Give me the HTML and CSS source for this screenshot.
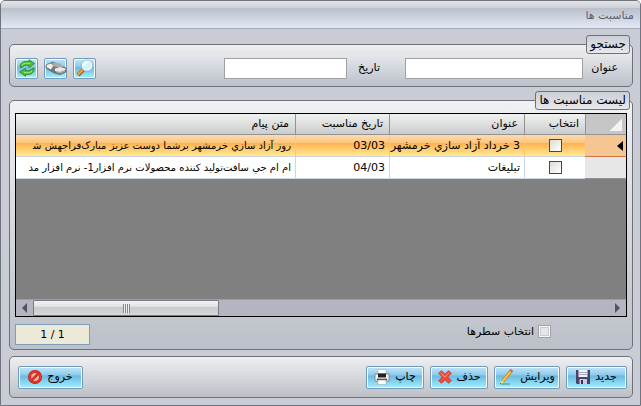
FILE: index.html
```
<!DOCTYPE html>
<html lang="fa" dir="rtl">
<head>
  <meta charset="UTF-8">
  <title>مناسبت ها</title>
  <link rel="stylesheet" href="styles.css">
</head>
<body>

<div class="window">
  <h1 class="title">مناسبت ها</h1>

  <div class="content">
    <!-- search -->
    <form class="panel search">
      <h2 class="caption">جستجو</h2>
      <label class="lbl-name" for="name">عنوان</label>
      <input class="box box-name" type="text" id="name">
      <label class="lbl-date" for="date">تاریخ</label>
      <input class="box box-date" type="text" id="date">
      <div class="tools">
        <button type="button" class="btn tool" aria-label="جستجو">
          <svg width="20" height="18" viewBox="0 0 20 18">
            <path d="M3 16L8 11" stroke="#8a5a20" stroke-width="4"/>
            <path d="M3 15.500L8 10.500" stroke="#f59a2c" stroke-width="2.500"/>
            <circle cx="12" cy="6.500" r="5" fill="#d4f1fc" stroke="#f4fbff" stroke-width="1.500"/>
            <circle cx="12" cy="6.500" r="5.700" fill="none" stroke="#6f9cc0" stroke-width=".6"/>
            <path d="M9 7a3.500 3.500 0 0 1 4-3.500" fill="none" stroke="#fff" stroke-width="1.500"/>
          </svg>
        </button>
        <button type="button" class="btn tool" aria-label="پاک کردن">
          <svg width="22" height="18" viewBox="0 0 22 18">
            <path d="M1 6L8 3L21 9V13L15 15.500L9 14L1 9Z" fill="#777" stroke="#666" stroke-width=".8"/>
            <path d="M8 3.500L14 4L19 8L12 8L6 7Z" fill="#a9abad"/>
            <path d="M1.500 6L6 4.500L8 7L6 10.500L2 8.500Z" fill="#f0f0f0"/>
            <path d="M10 9.500L15 8L20.500 9.500V11L15 13L10 12Z" fill="#e9e9e9"/>
            <path d="M11 12.500L15 14L20 12" fill="none" stroke="#bbb"/>
          </svg>
        </button>
        <button type="button" class="btn tool" aria-label="بازخوانی">
          <svg width="18" height="18" viewBox="0 0 18 18" fill="#4fc52c" stroke="#237c19" stroke-width=".8">
            <path d="M2 8C2 4 5 2 11 2.500V.8L16.500 4.500L11 8.500V6.500C7 6 5 6.500 4 8.500Z"/>
            <path d="M16 9.500C16 14 13 16 7.500 15.500V17.200L1.500 13L7.500 9.500V11.500C11 12 13 11.500 14 9.500Z"/>
            <path d="M4 6C6 4 8 4 12 4.500M14 12C12 14 10 14 6 13.500" fill="none" stroke="#b5f28f"/>
          </svg>
        </button>
      </div>
    </form>

    <!-- list -->
    <section class="panel list">
      <h2 class="caption">لیست مناسبت ها</h2>
      <div class="grid">
        <table>
          <colgroup>
            <col class="col-mark">
            <col class="col-check">
            <col class="col-name">
            <col class="col-date">
            <col>
          </colgroup>
          <thead>
            <tr>
              <th class="corner"></th>
              <th>انتخاب</th>
              <th>عنوان</th>
              <th>تاریخ مناسبت</th>
              <th>متن پیام</th>
            </tr>
          </thead>
          <tbody>
            <tr class="current">
              <td class="mark"><svg width="6" height="10" viewBox="0 0 6 10"><path d="M6 0V10L0 5Z"/></svg></td>
              <td class="pick"><input type="checkbox" aria-label="انتخاب"></td>
              <td>3 خرداد آزاد سازي خرمشهر</td>
              <td>03/03</td>
              <td class="message">روز آزاد سازي خرمشهر برشما دوست عزیز مبارک‌فراجهش ش&zwj;</td>
            </tr>
            <tr>
              <td class="mark"></td>
              <td class="pick"><input type="checkbox" aria-label="انتخاب"></td>
              <td>تبلیغات</td>
              <td>04/03</td>
              <td class="message">ام ام جي سافت‌تولید کننده محصولات نرم افزار1- نرم افزار مد</td>
            </tr>
          </tbody>
        </table>
        <div class="scroll">
          <svg class="arrow" width="5" height="10" viewBox="0 0 5 10"><path d="M0 0V10L5 5Z" fill="#50545e"/></svg>
          <div class="thumb"><i></i></div>
          <svg class="arrow" width="5" height="10" viewBox="0 0 5 10"><path d="M5 0V10L0 5Z" fill="#50545e"/></svg>
        </div>
      </div>
      <div class="status">
        <label class="all"><input type="checkbox">انتخاب سطرها</label>
        <input class="pages" type="text" value="1 / 1" dir="ltr" aria-label="صفحه" readonly>
      </div>
    </section>

    <!-- buttons -->
    <div class="panel actions">
      <button type="button" class="btn new">
        <span>جدید</span>
        <svg width="14" height="14" viewBox="0 0 14 14">
          <path d="M0 0H14V14H1L0 13Z" fill="#47436b"/>
          <path d="M2.500 0H11.500V7H2.500Z" fill="#f1f2fa"/>
          <path d="M3 2.500H11M3 4.500H11" stroke="#a5a7c2"/>
          <path d="M3.500 9H11V14H3.500Z" fill="#c9cbdc"/>
          <path d="M5 10H7V14H5Z" fill="#37345a"/>
        </svg>
      </button>
      <button type="button" class="btn edit">
        <span>ویرایش</span>
        <svg width="16" height="16" viewBox="0 0 16 16">
          <path d="M2 15H11" stroke="#6b9fae" stroke-width="1.500"/>
          <path d="M3.500 12.500L12 2" stroke="#b97415" stroke-width="3.400"/>
          <path d="M3.500 12.500L12 2" stroke="#ffc936" stroke-width="2"/>
          <path d="M11.500 2.600L13 .8" stroke="#d96758" stroke-width="3.400"/>
          <path d="M2.200 11.400L1 15.200L4.800 13.600Z" fill="#f2d7a6"/>
          <path d="M1.400 14L1 15.200L2.300 14.700Z" fill="#222"/>
        </svg>
      </button>
      <button type="button" class="btn delete">
        <span>حذف</span>
        <svg width="14" height="14" viewBox="0 0 14 14">
          <path d="M3.500 .7L7 4.200L10.500 .7L13.300 3.200L9.800 7L13.300 10.800L10.500 13.300L7 9.800L3.500 13.300L.7 10.800L4.200 7L.7 3.200Z" fill="#f04c3b" stroke="#c22d27" stroke-width=".7"/>
          <path d="M2.500 3L7 7L11 3" fill="none" stroke="#ff9280"/>
        </svg>
      </button>
      <button type="button" class="btn print">
        <span>چاپ</span>
        <svg width="16" height="16" viewBox="0 0 16 16">
          <path d="M4 .5H12V5H4Z" fill="#fff" stroke="#aaa" stroke-width=".6"/>
          <path d="M1 5H15V12H1Z" fill="#f4f4f2" stroke="#777" stroke-width=".8"/>
          <path d="M4 4.500H12V8.500H4Z" fill="#222"/>
          <path d="M3 10.500H13" stroke="#333" stroke-width="1.500"/>
          <path d="M4 11H12V15.500H4Z" fill="#fff" stroke="#aaa" stroke-width=".6"/>
        </svg>
      </button>
      <button type="button" class="btn exit">
        <span>خروج</span>
        <svg width="14" height="14" viewBox="0 0 14 14">
          <circle cx="7" cy="7" r="5.500" fill="#f3b7ad" stroke="#a92019" stroke-width="3"/>
          <circle cx="7" cy="7" r="5.500" fill="none" stroke="#ea3527" stroke-width="2"/>
          <path d="M3 11L11 3" stroke="#e12d22" stroke-width="2.500"/>
        </svg>
      </button>
    </div>
  </div>
</div>

</body>
</html>
```
FILE: styles.css
```
* {
  box-sizing: border-box;
  margin: 0;
  padding: 0;
}

body {
  background: #fff;
  color: #000;
  font: 11px/14px "DejaVu Sans", sans-serif;
}

button,
input {
  font: inherit;
  color: inherit;
}

.window {
  display: flex;
  flex-direction: column;
  min-height: 100vh;
  border: 1px solid #6e737c;
  border-radius: 5px 5px 0 0;
  background: #c9cbd5;
  overflow: hidden;
}

.title {
  height: 28px;
  padding: 8px 6px 0;
  border-bottom: 1px solid #a9abbb;
  background: linear-gradient(#e4e5e8, #cfd1d6 7px, #b9c0cb 7px, #e3e9f4);
  color: #5c5f69;
  font-size: 11px;
  font-weight: normal;
}

.content {
  flex: 1;
  display: flex;
  flex-direction: column;
  padding: 15px 7px 7px 8px;
}

.panel {
  position: relative;
  border: 1px solid #6e7178;
  border-radius: 5px;
}

/* sits on the top border of the panel */
.caption {
  position: absolute;
  top: -10px;
  right: 2px;
  height: 19px;
  padding: 1px 3px;
  border: 1px solid #6e7178;
  border-radius: 3px;
  background: linear-gradient(#ccced6, #e6e8ec);
  font-size: 12px;
  font-weight: normal;
  white-space: nowrap;
}

.search {
  display: flex;
  align-items: center;
  height: 43px;
  padding: 5px 14px 0 5px;
  background: linear-gradient(#eeeff0, #e4e5e8 9px, #e7e8ec 9px, #bbc0c9);
}

.lbl-name {
  width: 35px;
}

.lbl-date {
  width: 33px;
  margin-right: 25px;
}

.box {
  height: 21px;
  padding: 0 3px;
  border: 1px solid #a0a0a0;
  background: #fff;
}

.box-name {
  width: 178px;
}

.box-date {
  width: 123px;
}

.tools {
  display: flex;
  gap: 6px;
  margin-right: auto;
}

.btn {
  display: flex;
  align-items: center;
  justify-content: center;
  gap: 5px;
  height: 23px;
  border: 1px solid #7399bb;
  border-radius: 2px;
  box-shadow: inset 0 0 0 1px #f4fcff;
  background: linear-gradient(#c1e5f6, #8acaeb 40%, #68b8e2 41%, #a4f0fb);
  cursor: pointer;
}

.tool {
  width: 23px;
  height: 21px;
}

.btn svg {
  flex: none;
}

.list {
  flex: 1;
  display: flex;
  flex-direction: column;
  margin: 13px 0 6px;
  padding: 12px 5px 4px;
  background: linear-gradient(#f0f1f3, #bcc0c8);
}

.grid {
  flex: 1;
  display: flex;
  flex-direction: column;
  border: 1px solid #000;
  background: #808080;
  overflow: hidden;
}

table {
  width: 100%;
  table-layout: fixed;
  border-collapse: separate;
  border-spacing: 0;
}

.col-mark {
  width: 41px;
}

.col-check {
  width: 61px;
}

.col-name {
  width: 135px;
}

.col-date {
  width: 94px;
}

th,
td {
  overflow: hidden;
  white-space: nowrap;
  text-align: right;
}

th {
  height: 21px;
  padding: 0 6px;
  border-left: 1px solid #929292;
  border-bottom: 1px solid #929292;
  background: linear-gradient(#f0f2ef, #cbccce);
  font-weight: normal;
}

th:last-child,
td:last-child {
  border-left: 0;
}

.corner {
  background: linear-gradient(135deg, transparent 50%, #f3f3f3 50%) 24px 5px / 12px 12px no-repeat #c6c6c6;
}

td {
  height: 22px;
  padding: 0 4px;
  border-left: 1px solid #cdd6e8;
  border-bottom: 1px solid #cdd6e8;
  background: #fff;
}

.current td {
  border-left-color: #ffc575;
  background: linear-gradient(#fbdcb3, #fec77f 35%, #ffb254 40%, #ffeb92);
}

td.message {
  padding-left: 0;
  font-size: 10px;
}

td.mark {
  padding: 0 3px;
  border-left: 0;
  border-bottom-color: #929292;
  background: #e7e7e7;
}

.current td.mark {
  border-bottom-color: #cf7440;
  background: #f5c592;
}

.mark svg,
.pick input {
  display: block;
}

.pick input,
.all input {
  appearance: none;
  width: 13px;
  height: 13px;
  border: 1px solid #1c5180;
  background: linear-gradient(135deg, #dcdcd7, #fff);
}

.pick input {
  margin: 0 auto;
}

.scroll {
  display: flex;
  align-items: center;
  height: 17px;
  margin-top: auto;
  padding: 0 6px;
  border-top: 1px solid #9b9ea7;
  background: #b3b6c0;
}

.arrow {
  flex: none;
}

.thumb {
  display: flex;
  align-items: center;
  justify-content: center;
  width: 186px;
  height: 16px;
  margin-right: auto;
  margin-left: 6px;
  border: 1px solid #777a82;
  border-radius: 1px;
  background: linear-gradient(#f3f3f4, #dedfe1 45%, #c8cacd 46%, #d6d7d9);
}

.thumb i {
  width: 7px;
  height: 9px;
  background: repeating-linear-gradient(90deg, #888 0 1px, #eee 1px 2px);
}

.status {
  display: flex;
  justify-content: space-between;
  margin-top: 7px;
}

.all {
  display: flex;
  gap: 4px;
  height: 17px;
  padding: 1px 76px 0 0;
}

.all input {
  border-color: #a2a3a6;
  background: #e6e7e9;
  box-shadow: inset 0 0 0 1px #f6f6f6, inset 0 0 0 2px #c9cbd0;
}

.pages {
  width: 75px;
  height: 21px;
  border: 1px solid #7f9db9;
  background: #ece9d8;
  text-align: center;
}

.actions {
  display: flex;
  align-items: center;
  gap: 6px;
  height: 42px;
  padding: 0 5px 0 8px;
  background: linear-gradient(#eeeff1, #bcc0c6);
}

.new {
  width: 61px;
}

.edit {
  width: 66px;
}

.delete,
.print {
  width: 58px;
}

.exit {
  width: 65px;
  margin-right: auto;
}
```
